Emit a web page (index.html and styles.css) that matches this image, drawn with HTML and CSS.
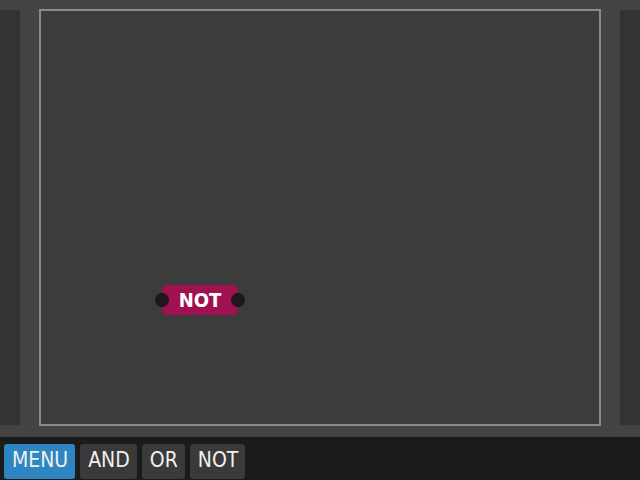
FILE: index.html
```html
<!DOCTYPE html>
<html>
<head>
<meta charset="utf-8">
<link rel="stylesheet" href="styles.css">
</head>
<body>
<div class="workspace">
  <div class="side"></div>
  <div class="canvas">
    <div class="node" style="left:121px; top:274px;">
      <span class="port port-in"></span>
      <span class="node-label">NOT</span>
      <span class="port port-out"></span>
    </div>
  </div>
  <div class="side"></div>
</div>
<div class="toolbar">
  <button class="btn btn-menu">MENU</button>
  <button class="btn">AND</button>
  <button class="btn">OR</button>
  <button class="btn">NOT</button>
</div>
</body>
</html>
```
FILE: styles.css
```css
html, body {
  margin: 0;
  padding: 0;
  width: 640px;
  height: 480px;
  overflow: hidden;
  background: #444444;
  font-family: "DejaVu Sans Condensed", "DejaVu Sans", sans-serif;
  font-stretch: condensed;
}
.workspace {
  height: 437px;
  box-sizing: border-box;
  padding-top: 9px;
  display: flex;
  align-items: flex-start;
  justify-content: space-between;
}
.side {
  width: 20px;
  height: 415px;
  margin-top: 1px;
  background: #333333;
}
.canvas {
  position: relative;
  width: 562px;
  height: 417px;
  box-sizing: border-box;
  border: 2px solid #8a8a8a;
  background: #3c3c3c;
}
.node {
  position: absolute;
  width: 76px;
  height: 30px;
  background: #a1104f;
  border-radius: 5px;
  display: flex;
  align-items: center;
  justify-content: center;
}
.node-label {
  color: #ffffff;
  font-weight: bold;
  font-size: 20px;
  line-height: 30px;
}
.port {
  position: absolute;
  top: 8px;
  width: 14px;
  height: 14px;
  border-radius: 50%;
  background: #1a1a1a;
}
.port-in { left: -7px; }
.port-out { right: -7px; }
.toolbar {
  height: 43px;
  box-sizing: border-box;
  background: #1b1b1b;
  padding: 7px 4px 0;
  display: flex;
  align-items: flex-start;
  gap: 5px;
  overflow: hidden;
}
.btn {
  height: 35px;
  margin: 0;
  border: none;
  border-radius: 3px;
  background: #3a3a3a;
  color: #f0f0f0;
  font-family: "DejaVu Sans Condensed", "DejaVu Sans", sans-serif;
  font-stretch: condensed;
  font-size: 21px;
  line-height: 32px;
  padding: 0 7px 0 8px;
  display: flex;
  align-items: flex-start;
}
.btn-menu {
  background: #2e86c1;
}
```
